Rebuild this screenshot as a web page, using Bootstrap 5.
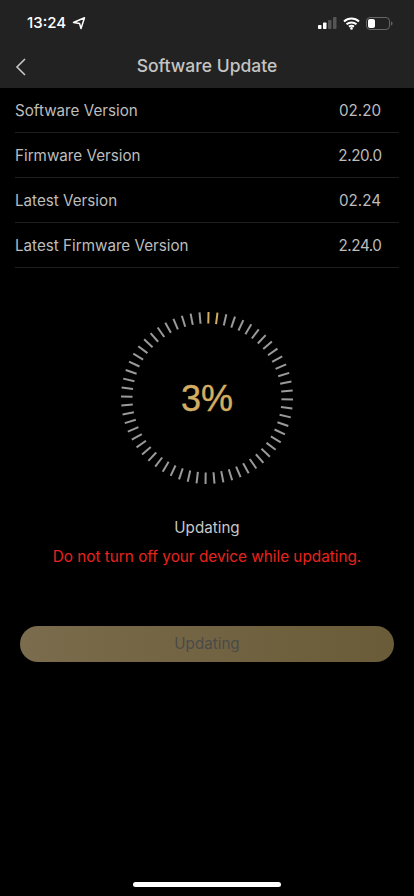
<!DOCTYPE html>
<html lang="en">
<head>
    <meta charset="UTF-8">
    <meta name="viewport" content="width=device-width, initial-scale=1.0">
    <title>Software Update</title>
    <link href="https://cdn.jsdelivr.net/npm/bootstrap@5.3.2/dist/css/bootstrap.min.css" rel="stylesheet">
    <style>
        html, body { height: 100%; }
        body { background: #000; font-family: Inter, "Liberation Sans", sans-serif; overflow: hidden; }
        .screen { height: 896px; }
        .top-area { background: #222; height: 88px; }
        .status-row { height: 44px; padding: 2px 21px 0 27px; color: #fff; font-size: 15px; font-weight: 500; }
        .status-time { width: 42px; }
        .status-arrow { margin-left: 3px; }
        .signal-ico { margin-right: 6px; }
        .wifi-ico { margin-right: 6px; }
        .title-row { height: 44px; }
        .back-btn { left: 15px; top: 58px; }
        .page-title { color: #c4c4c4; font-size: 17.5px; font-weight: 500; line-height: 44px; }
        .info-list { margin-left: 15px; padding-right: 15px; }
        .info-row { height: 45px; border-bottom: 1px solid #1e1e1e; color: #bdbdbd; font-size: 15.2px; padding-top: 3px; }
        .info-val { width: 44px; text-align: center; margin-right: 17px; }
        .info-val-long { letter-spacing: -.4px; }
        .ring-wrap { margin-top: 42px; height: 176px; }
        .ring-pct { color: #d3ae62; font-family: "Liberation Sans", sans-serif; font-size: 36px; line-height: 1; margin-top: 2px; -webkit-text-stroke: .4px #d3ae62; }
        .update-lbl { color: #c8c8c8; font-size: 15.2px; margin-top: 32px; line-height: 20px; }
        .warn-lbl { color: #e8241c; font-size: 15.3px; margin-top: 9px; line-height: 20px; }
        .update-btn { display: block; width: 374px; height: 36px; margin: 59px auto 0; padding: 0; border: 0; border-radius: 18px; color: #4a4a48; font-size: 15.2px; background: linear-gradient(90deg, #7a6c4c, #6a5c38); }
        .home-bar { left: 133px; top: 882px; width: 148px; height: 5px; background: #fff; border-radius: 3px; }
    </style>
</head>
<body>
    <div class="screen position-relative">
        <div class="top-area">
            <div class="status-row d-flex align-items-center">
                <span class="status-time">13:24</span>
                <svg class="status-arrow" width="14" height="14" viewBox="0 0 14 14" fill="none" stroke="#fff" stroke-width="1.5" stroke-linejoin="round"><path d="M1.5 6.5 12.5 1.8 9 12.5 7.6 7.6Z"/></svg>
                <svg class="signal-ico ms-auto" width="19" height="13" viewBox="0 0 19 13"><rect x="0" y="8" width="3.5" height="4" rx=".8" fill="#fff"/><rect x="5" y="5.5" width="3.5" height="6.5" rx=".8" fill="#fff"/><rect x="10" y="3" width="3.5" height="9" rx=".8" fill="#555"/><rect x="15" y="0" width="3.5" height="12" rx=".8" fill="#555"/></svg>
                <svg class="wifi-ico" width="17" height="13" viewBox="0 0 17 13" fill="none" stroke="#fff" stroke-width="2"><path d="M1 4.5C5.2.6 11.8.6 16 4.5M3.5 7.2C6.3 4.8 10.7 4.8 13.5 7.2M6 9.6C7.4 8.6 9.6 8.6 11 9.6"/><circle cx="8.5" cy="11.4" r="1.3" fill="#fff" stroke="none"/></svg>
                <svg width="27" height="13" viewBox="0 0 27 13"><rect x=".5" y=".5" width="23" height="12" rx="3.5" fill="none" stroke="#666"/><rect x="2" y="2" width="7" height="9" rx="2" fill="#fff"/><path d="M25 4.5c1 .3 1.5 1 1.5 2s-.5 1.7-1.5 2z" fill="#666"/></svg>
            </div>
            <div class="title-row text-center page-title">Software Update</div>
        </div>
        <svg class="back-btn position-absolute" width="11" height="18" viewBox="0 0 11 18" fill="none" stroke="#c8c8c8" stroke-width="1.6"><path d="M10 1 2 9l8 8"/></svg>

        <div class="info-list">
            <div class="info-row d-flex justify-content-between align-items-center"><span>Software Version</span><span class="info-val">02.20</span></div>
            <div class="info-row d-flex justify-content-between align-items-center"><span>Firmware Version</span><span class="info-val info-val-long">2.20.0</span></div>
            <div class="info-row d-flex justify-content-between align-items-center"><span>Latest Version</span><span class="info-val">02.24</span></div>
            <div class="info-row d-flex justify-content-between align-items-center"><span>Latest Firmware Version</span><span class="info-val info-val-long">2.24.0</span></div>
        </div>

        <div class="ring-wrap position-relative d-flex justify-content-center align-items-center">
            <svg id="ring" class="position-absolute" width="176" height="176" viewBox="-88 -88 176 176"></svg>
            <span class="ring-pct">3%</span>
        </div>

        <div class="update-lbl text-center">Updating</div>
        <div class="warn-lbl text-center">Do not turn off your device while updating.</div>
        <button class="update-btn" type="button">Updating</button>

        <div class="home-bar position-absolute"></div>
    </div>

    <script>
        // tick marks round the progress ring, first two are the done ones
        const ring = document.getElementById('ring');
        let ticks = '';
        for (let i = 0; i < 60; i++) {
            const a = (1 + i * 6) * Math.PI / 180;
            const s = Math.sin(a), c = -Math.cos(a);
            const color = i < 2 ? '#d3ae62' : '#9a9a9a';
            ticks += `<line x1="${(74.5 * s).toFixed(2)}" y1="${(74.5 * c).toFixed(2)}" x2="${(86 * s).toFixed(2)}" y2="${(86 * c).toFixed(2)}" stroke="${color}" stroke-width="2"/>`;
        }
        ring.innerHTML = ticks;
    </script>
    <script src="https://cdn.jsdelivr.net/npm/bootstrap@5.3.2/dist/js/bootstrap.bundle.min.js"></script>
</body>
</html>
